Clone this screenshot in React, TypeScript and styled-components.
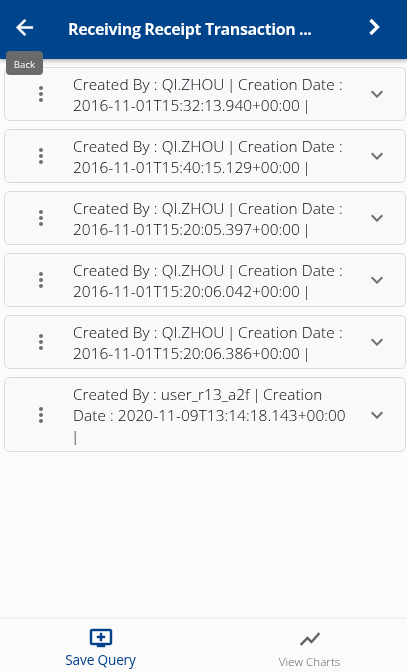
import React from "react";
import styled, { createGlobalStyle } from "styled-components";
import { MdAddToQueue, MdArrowBack, MdExpandMore, MdMoreVert, MdShowChart } from "react-icons/md";

const GlobalStyle = createGlobalStyle`
  * { box-sizing: border-box; }
  body {
    margin: 0;
    background: #fbfbfb;
    font-family: "Open Sans", "Noto Sans", sans-serif;
  }
  button {
    font: inherit;
    color: inherit;
    background: none;
    border: 0;
    padding: 0;
  }
`;

const Screen = styled.div`
  display: flex;
  flex-direction: column;
  height: 100vh;
  overflow: hidden;
  will-change: transform;
`;

const Header = styled.header`
  position: relative;
  z-index: 1;
  flex: none;
  display: flex;
  height: 59px;
  padding: 0 17px 4px 12px;
  align-items: center;
  color: #fff;
  background: #00458c;
  box-shadow: 0 1px 5px rgba(0, 0, 0, 0.4);
`;

const HeaderButton = styled.button`
  display: flex;
  flex: none;
  width: 32px;
  justify-content: center;
  padding-bottom: 1px;
  svg { display: block; }
`;

const BackButton = styled(HeaderButton)`
  width: 25px;
  svg { flex: none; }
  path:last-child {
    stroke: #fff;
    stroke-width: 0.5px;
  }
`;

const Title = styled.h1`
  flex: 1;
  margin: 3px 0 0 31px;
  font-size: 16px;
  line-height: 22px;
  font-weight: 700;
  letter-spacing: -0.4px;
  white-space: nowrap;
`;

const Tooltip = styled.div`
  position: absolute;
  left: 6px;
  top: 51px;
  width: 37px;
  height: 24px;
  border-radius: 4px;
  background: #696a6c;
  color: #fff;
  font-size: 9.7px;
  line-height: 27px;
  text-align: center;
`;

const List = styled.main`
  flex: 1;
  display: flex;
  flex-direction: column;
  gap: 8px;
  padding: 8px 1px 0 4px;
`;

const Card = styled.article`
  display: flex;
  align-items: center;
  border: 1px solid #d9dcdf;
  border-radius: 5px;
  background: #f8f9fb;
  color: #6e6e6e;
  svg { display: block; }
`;

const MenuButton = styled.button`
  flex: none;
  width: 68px;
  padding-left: 24px;
`;

const Summary = styled.div`
  flex: 1;
  padding: 6px 0 4px;
  color: #08090c;
  font-size: 15.4px;
  font-weight: 360;
  line-height: 21px;
  white-space: nowrap;
  will-change: transform;
`;

const Line = styled.div<{ $tracking: number; $hanging: boolean }>`
  letter-spacing: ${({ $tracking }) => $tracking}px;
  text-indent: ${({ $hanging }) => ($hanging ? -2 : 0)}px;
`;

const Divider = styled.span`
  letter-spacing: -1.5px;
`;

const ExpandButton = styled.button`
  flex: none;
  width: 40px;
`;

const BottomBar = styled.nav`
  flex: none;
  display: grid;
  grid-template-columns: 200px 1fr;
  height: 55px;
  border-top: 2px solid #f0f0f0;
`;

const Tab = styled.button<{ $active?: boolean }>`
  display: flex;
  flex-direction: column;
  align-items: center;
  padding-top: ${({ $active }) => ($active ? 7 : 8)}px;
  padding-left: ${({ $active }) => ($active ? 1 : 12)}px;
  color: ${({ $active }) => ($active ? "#00408a" : "#606060")};
  font-size: ${({ $active }) => ($active ? 13.6 : 11.7)}px;
  line-height: 20px;
  svg { display: block; }
  path:last-child {
    stroke: currentColor;
    stroke-width: 0.4px;
  }
`;

const TabLabel = styled.span<{ $active?: boolean }>`
  font-weight: ${({ $active }) => ($active ? 400 : 360)};
  letter-spacing: ${({ $active }) => ($active ? -0.15 : 0)}px;
`;

type LineData = [text: string, tracking: number];

const qiZhou = (time: string): LineData[] => [
  ["Created By : QI.ZHOU | Creation Date :", 0.11],
  [`2016-11-01T${time}+00:00 |`, 0.03],
];

const records: LineData[][] = [
  qiZhou("15:32:13.940"),
  qiZhou("15:40:15.129"),
  qiZhou("15:20:05.397"),
  qiZhou("15:20:06.042"),
  qiZhou("15:20:06.386"),
  [
    ["Created By : user_r13_a2f | Creation", 0.04],
    ["Date : 2020-11-09T13:14:18.143+00:00", 0.07],
    ["|", 0],
  ],
];

function SummaryLine({ text, tracking }: { text: string; tracking: number }) {
  const parts = text.split(/( ?\|)/);
  return (
    <Line $tracking={tracking} $hanging={text.startsWith("|")}>
      {parts[0]}
      {parts.length > 1 && <Divider>{parts[1]}</Divider>}
      {parts[2]}
    </Line>
  );
}

export default function App() {
  return (
    <Screen>
      <GlobalStyle />
      <Header>
        <BackButton aria-label="Back"><MdArrowBack size={25} /></BackButton>
        <Title>Receiving Receipt Transaction ...</Title>
        <HeaderButton aria-label="Next">
          <svg width="14" height="18" viewBox="0 0 14 18" fill="none" stroke="#fff" strokeWidth="3.2">
            <path d="M3.5 2L10.5 9L3.5 16" />
          </svg>
        </HeaderButton>
        <Tooltip role="tooltip">Back</Tooltip>
      </Header>
      <List>
        {records.map((lines, index) => (
          <Card key={index}>
            <MenuButton aria-label="More actions"><MdMoreVert size={24} /></MenuButton>
            <Summary>
              {lines.map(([text, tracking]) => (
                <SummaryLine key={text} text={text} tracking={tracking} />
              ))}
            </Summary>
            <ExpandButton aria-label="Expand"><MdExpandMore size={24} /></ExpandButton>
          </Card>
        ))}
      </List>
      <BottomBar>
        <Tab $active>
          <MdAddToQueue size={24} />
          <TabLabel $active>Save Query</TabLabel>
        </Tab>
        <Tab>
          <MdShowChart size={24} />
          <TabLabel>View Charts</TabLabel>
        </Tab>
      </BottomBar>
    </Screen>
  );
}
